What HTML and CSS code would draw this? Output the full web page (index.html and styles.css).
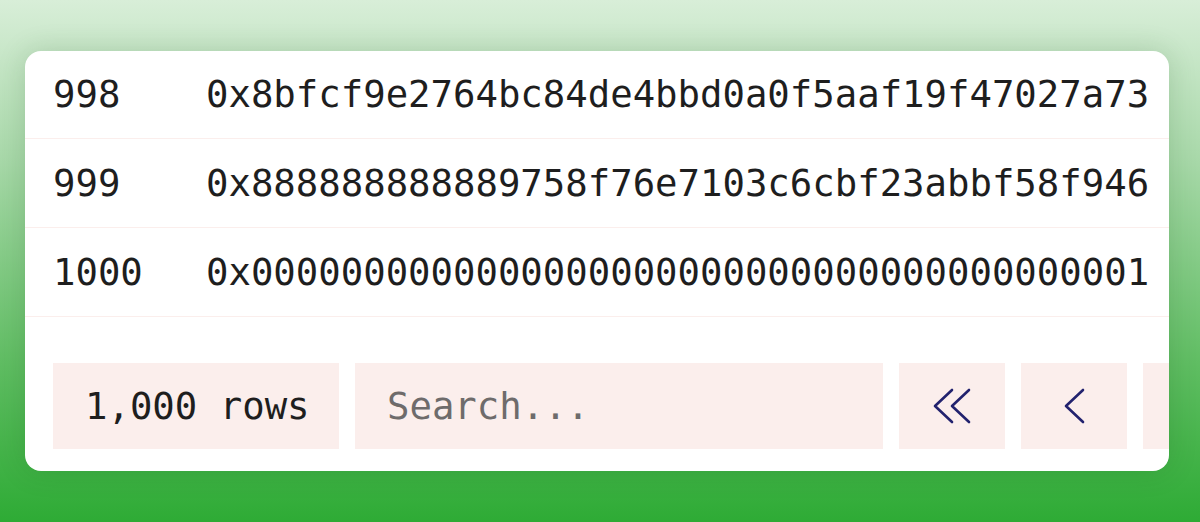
FILE: index.html
```html
<!DOCTYPE html>
<html lang="en">
<head>
<meta charset="utf-8">
<title>Rows</title>
<link rel="stylesheet" href="styles.css">
</head>
<body>
<div class="card">
  <div class="table">
    <div class="row"><span class="idx">998</span><span class="hash">0x8bfcf9e2764bc84de4bbd0a0f5aaf19f47027a73</span></div>
    <div class="row"><span class="idx">999</span><span class="hash">0x888888888889758f76e7103c6cbf23abbf58f946</span></div>
    <div class="row"><span class="idx">1000</span><span class="hash">0x0000000000000000000000000000000000000001</span></div>
  </div>
  <div class="footer">
    <div class="box count">1,000 rows</div>
    <div class="box search"><input class="search-input" type="text" placeholder="Search..."></div>
    <button class="box btn" aria-label="First page">
      <svg width="38" height="36" viewBox="0 0 38 36" fill="none" stroke="#22226e" stroke-width="2.6" stroke-linecap="round" stroke-linejoin="round"><path d="M19 2 L2 18 L19 34"/><path d="M36 2 L19 18 L36 34"/></svg>
    </button>
    <button class="box btn" aria-label="Previous page">
      <svg width="21" height="36" viewBox="0 0 21 36" fill="none" stroke="#22226e" stroke-width="2.6" stroke-linecap="round" stroke-linejoin="round"><path d="M19 2 L2 18 L19 34"/></svg>
    </button>
    <button class="box btn" aria-label="Next page"></button>
  </div>
</div>
</body>
</html>
```

FILE: styles.css
```css
html, body {
  margin: 0;
  padding: 0;
}
body {
  width: 1200px;
  height: 522px;
  overflow: hidden;
  background: linear-gradient(180deg, #d8eed8 0%, #a9d9aa 30%, #5fbd62 70%, #2eab35 100%);
  font-family: "DejaVu Sans Mono", "Liberation Mono", monospace;
  color: #1e1e1e;
  padding-top: 51px;
  box-sizing: border-box;
}
.card {
  margin-left: 25px;
  width: 1144px;
  height: 420px;
  background: #ffffff;
  border-radius: 16px;
  overflow: hidden;
  box-shadow: 0 0 28px rgba(20, 80, 20, 0.18);
}
.table {
  margin-top: -1px;
}
.row {
  display: grid;
  grid-template-columns: 153px auto;
  align-items: center;
  height: 88px;
  border-bottom: 1.5px solid #fbeeec;
  padding-left: 28px;
  font-size: 37.3px;
  white-space: nowrap;
}
.footer {
  display: flex;
  gap: 16px;
  padding: 46px 0 0 28px;
  white-space: nowrap;
}
.box {
  flex: none;
  height: 86px;
  background: #fbeeec;
  box-sizing: border-box;
  display: flex;
  align-items: center;
  border: none;
  margin: 0;
}
.count {
  width: 286px;
  padding-left: 32px;
  font-size: 37.3px;
}
.search {
  width: 528px;
  padding-left: 32px;
}
.search-input {
  border: none;
  background: transparent;
  outline: none;
  padding: 0;
  width: 100%;
  font-family: "DejaVu Sans Mono", "Liberation Mono", monospace;
  font-size: 37.3px;
  color: #1e1e1e;
}
.search-input::placeholder {
  color: #6e6b6b;
}
.btn {
  width: 106px;
  justify-content: center;
  padding: 0;
}
```
